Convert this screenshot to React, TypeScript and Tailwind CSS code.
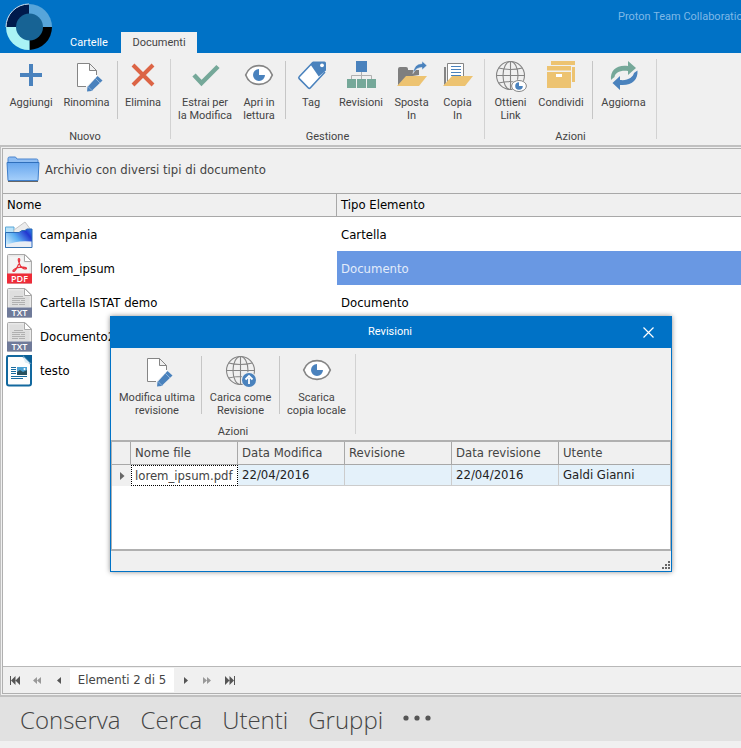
import type { ReactNode } from "react";

const BLUE = "#4a82bd";
const GREEN = "#75a899";
const GOLD = "#edc371";
const GREY = "#858585";

/* ---------- ribbon icons ---------- */

function Icon({ children }: { children: ReactNode }) {
  return (
    <svg width="32" height="32" viewBox="0 0 32 32" fill="none" aria-hidden="true">
      {children}
    </svg>
  );
}

const PlusIcon = () => (
  <Icon>
    <path d="M14 3h4v9h9v4h-9v9h-4v-9H5v-4h9z" fill={BLUE} />
  </Icon>
);

const EditPageIcon = () => (
  <Icon>
    <path d="M18 2v8h8v5L15 26H6V2h12z" fill="#fff" />
    <path d="M15 25.500H6.500V2.500H18.500L25.500 9.500V14M18.500 2.500V9.500H25.500" stroke={GREY} />
    <path d="M26.500 15L31.500 19.500L20.500 30L16 30.500L16.500 26Z" fill={BLUE} />
    <path d="M24 17l5 5M17 25.500l4.500 4.500" stroke="#8fb2d8" />
  </Icon>
);

const CrossIcon = () => (
  <Icon>
    <path d="M6 4l20 20M26 4L6 24" stroke="#dc6445" strokeWidth="4" />
  </Icon>
);

const CheckIcon = () => (
  <Icon>
    <path d="M5 14l7.500 8L29 5.500" stroke={GREEN} strokeWidth="4.500" />
  </Icon>
);

const EyeIcon = () => (
  <Icon>
    <path d="M2.700 14C7 1.500 25 1.500 29.300 14C25 26.500 7 26.500 2.700 14Z" fill="#fff" stroke={GREY} strokeWidth="1.700" />
    <path d="M16 14V8A6 6 0 1 0 22 14Z" fill={BLUE} />
  </Icon>
);

const TagIcon = () => (
  <Icon>
    <path d="M18 1L3.500 16.500L14.500 27.500L31 10V1Z" fill="#fff" />
    <path d="M15.500 3.500L18 0.500H29.500Q31 0.500 31 2V9.500L23.700 15.500Z" fill={BLUE} />
    <path d="M18 1.300L4.200 15.800Q3.300 16.700 4.200 17.600L13.400 27Q14.300 27.800 15.200 27L30 11" stroke={BLUE} strokeWidth="1.600" />
    <circle cx="27" cy="4.300" r="1.900" fill="#fff" />
  </Icon>
);

const HierarchyIcon = () => (
  <Icon>
    <path d="M16.500 11v9M6.500 19v-4.500h20V19" stroke="#b0b0b0" />
    <path d="M11 0h11v11H11z" fill={BLUE} />
    <path d="M2 18h9v9H2zM12 18h9v9h-9zM22 18h9v9h-9z" fill={GREEN} />
  </Icon>
);

const MoveFolderIcon = () => (
  <Icon>
    <path d="M2 24V8Q2 6 4 6H10Q12 6 12 8V9H23V14L10 16L3 25Z" fill="#7f7f7f" />
    <path d="M10 15H31L23 25H1Z" fill={GOLD} />
    <path d="M17 12.500Q18 2.500 26 2.500V0L31 4.500L26 9V6.500Q20 6.500 17 12.500Z" fill={BLUE} stroke="#f0f0f0" strokeWidth="0.600" />
  </Icon>
);

const CopyFolderIcon = () => (
  <Icon>
    <path d="M2 6h2v17l-2 1z" fill={GREY} />
    <path d="M5.500 2.500h16v13l-16 8z" fill="#fff" stroke={GREY} />
    <path d="M9 5.500h10M9 8.500h10M9 11.500h10M9 14.500h10" stroke={BLUE} />
    <path d="M10 15H31L23 25H1Z" fill={GOLD} />
  </Icon>
);

const globe = (
  <>
    <circle cx="15.500" cy="14.500" r="14" />
    <ellipse cx="15.500" cy="14.500" rx="7.500" ry="14" />
    <path d="M15.500 0.500v28M1.500 14.500h28M3.500 7Q15.500 10 27.500 7M3.500 22Q15.500 19 27.500 22" />
  </>
);

const GlobeEyeIcon = () => (
  <Icon>
    <g stroke={GREY} strokeWidth="1.100">{globe}</g>
    <ellipse cx="24" cy="25" rx="8" ry="6.500" fill="#f0f0f0" />
    <ellipse cx="24" cy="25" rx="7.400" ry="5.500" fill="#fff" stroke={GREY} />
    <path d="M24 25v-3.800a3.800 3.800 0 1 0 3.800 3.800z" fill={BLUE} />
  </Icon>
);

const GlobeUpIcon = () => (
  <Icon>
    <g stroke={GREY} strokeWidth="1.100">{globe}</g>
    <circle cx="24" cy="24" r="7.900" fill="#f0f0f0" />
    <circle cx="24" cy="24" r="7" fill={BLUE} />
    <path d="M24 28v-6M20.500 23.500l3.500-3.500l3.500 3.500" stroke="#fff" strokeWidth="1.800" />
  </Icon>
);

const BoxesIcon = () => (
  <Icon>
    <path d="M6 0h24v4H6zM27 6h3v15h-3zM2 5h24v4.500H2zM2 11h24v16H2z" fill={GOLD} />
    <path d="M11 13h6v3h-6z" fill="#fff" />
  </Icon>
);

const RefreshIcon = () => (
  <Icon>
    <path d="M3 19C2 9 9 3.500 20 5V0L28 7L20 14V10C12 9 7 12 6.500 16Q5 17 3 19Z" fill={GREEN} />
    <path d="M29.500 9.500C30 19 24 25 12 24V29L4.500 22L12 15V19C20 20 25 16 26 12Q27 11 29.500 9.500Z" fill={BLUE} />
  </Icon>
);

/* ---------- ribbon ---------- */

function RibbonButton({ width, icon, label }: { width: string; icon: ReactNode; label: ReactNode }) {
  return (
    <button type="button" className={`flex shrink-0 flex-col items-center pt-2 ${width}`}>
      {icon}
      <span className="mt-[3px] text-center whitespace-nowrap">{label}</span>
    </button>
  );
}

const Divider = () => <div className="mx-[2px] mt-2 h-[58px] w-px shrink-0 bg-[#c6c6c6]" />;

function RibbonGroup({ title, children }: { title: string; children: ReactNode }) {
  return (
    <section aria-label={title} className="flex shrink-0">
      <div className="flex flex-col px-1">
        <div className="flex h-[77px]">{children}</div>
        <div className="text-center">{title}</div>
      </div>
      <div className="mt-[6px] h-20 w-px bg-[#d2d2d2]" />
    </section>
  );
}

function Ribbon({ children }: { children: ReactNode }) {
  return (
    <div className="flex h-[92px] shrink-0 overflow-hidden bg-[#f0f0f0] font-[Roboto,sans-serif] text-[11px] leading-[13px] text-[#444]">
      {children}
    </div>
  );
}

/* ---------- file type icons ---------- */

const FolderLarge = () => (
  <svg width="34" height="28" viewBox="0 0 34 28" aria-hidden="true">
    <defs>
      <linearGradient id="fl" x1="0" y1="0" x2="0" y2="1">
        <stop offset="0" stopColor="#67a6ee" />
        <stop offset="1" stopColor="#a5cffa" />
      </linearGradient>
    </defs>
    <path d="M2 7V2.500Q2 1 3.500 1H9.500L11 3H30.500Q32 3 32 4.500V8Z" fill="#8fbdf2" stroke="#4c86cf" />
    <path d="M1 6.500H33L32 24.500H2Z" fill="url(#fl)" stroke="#3f7fcb" />
    <path d="M1.500 6.500h31" stroke="#2f6fbb" />
    <path d="M2 25.500h30" stroke="#666" />
  </svg>
);

const FolderSmall = () => (
  <svg width="28" height="28" viewBox="0 0 28 28" aria-hidden="true">
    <defs>
      <linearGradient id="fs" x1="0" y1="0.800" x2="1" y2="0.200">
        <stop offset="0" stopColor="#d6effc" />
        <stop offset="0.450" stopColor="#5aaef2" />
        <stop offset="0.850" stopColor="#2337cf" />
        <stop offset="1" stopColor="#2a6fe0" />
      </linearGradient>
    </defs>
    <path d="M0.500 6H9V12H0.500Z" fill="#b9e2f8" stroke="#5aa7d8" />
    <path d="M9 9L20 1L26 9L20 14H9Z" fill="#ececec" stroke="#c4c4c4" />
    <path d="M0.500 11.500H14L17 9.500H20L22 8H27V26.500H0.500Z" fill="url(#fs)" stroke="#2b6cb5" />
    <path d="M1 26V24Q12 19 26.500 20.500V26Z" fill="#e8edf4" />
    <path d="M0.500 26.500H27" stroke="#3876b4" />
  </svg>
);

function SheetIcon({ kind }: { kind: "PDF" | "TXT" }) {
  const pdf = kind === "PDF";
  return (
    <svg width="28" height="30" viewBox="0 0 28 30" aria-hidden="true">
      <path d="M3.500 0.500H20L26.500 7V29H2.500V1.500Q2.500 0.500 3.500 0.500Z" fill="#e9e9e9" stroke="#a9a9a9" />
      <path d="M4.500 2.500H18.500V8.500H24.500V19H4.500Z" fill={pdf ? "#f4f4f4" : "#dedede"} />
      <path d="M19.500 0.500V7.500H26.500Z" fill="#fff" stroke="#a9a9a9" />
      {pdf ? (
        <path
          d="M14 4.500C12.500 4.500 13.500 8.500 15.500 12C17 14.500 20.500 15.500 21.500 14.500C22 13 16 12.500 11.500 14C8 15.500 7 17.500 8.500 17.500C10.500 17.500 14.500 9.500 14.700 6.500Q14.800 4.500 14 4.500Z"
          fill="none"
          stroke="#e8353f"
          strokeWidth="1.200"
        />
      ) : (
        <path d="M9 8.500h9M7 10.500h13M7 12.500h8M16 12.500h4M7 14.500h13M7 16.500h6M14 16.500h6" stroke="#b0b0b0" />
      )}
      <path d="M2 19.500H27V29.500H2Z" fill={pdf ? "#ee2b38" : "#6f7a99"} />
      <text
        x="14.500"
        y="28"
        fontSize="9"
        fontWeight="600"
        textAnchor="middle"
        fill="#fff"
        fontFamily="Open Sans, sans-serif"
      >
        {kind}
      </text>
    </svg>
  );
}

const WriterIcon = () => (
  <svg width="28" height="32" viewBox="0 0 28 32" aria-hidden="true">
    <path d="M3 1H18L26 9V28.500Q26 30.500 24 30.500H4Q2 30.500 2 28.500V3Q2 1 3 1Z" fill="#fdfdfd" stroke="#12689e" strokeWidth="2" />
    <path d="M18 0H27V9Z" fill="#0a5f96" />
    <path d="M18 1L26 9L20 7.500Z" fill="#dcebf4" />
    <path d="M6 12.500h5M6 14.500h5M6 16.500h5M6 18.500h5M6 21.500h16M6 23.500h12" stroke="#176a9f" />
    <path d="M12 12h10v8H12z" fill="#4ba0d2" />
    <path d="M12 20v-3l3-2l3 2l4-2v5z" fill="#27505f" />
    <circle cx="19.500" cy="14" r="1" fill="#fff" />
  </svg>
);

const items = [
  { name: "campania", type: "Cartella", icon: <FolderSmall /> },
  { name: "lorem_ipsum", type: "Documento", icon: <SheetIcon kind="PDF" />, selected: true },
  { name: "Cartella ISTAT demo", type: "Documento", icon: <SheetIcon kind="TXT" /> },
  { name: "Documento2", type: "", icon: <SheetIcon kind="TXT" /> },
  { name: "testo", type: "", icon: <WriterIcon /> },
];

/* ---------- paging ---------- */

function PagerButton({ label, d, width = "w-[22px]", dim = false }: { label: string; d: string; width?: string; dim?: boolean }) {
  return (
    <button type="button" aria-label={label} className={`flex h-6 items-center justify-center ${width}`}>
      <svg width="11" height="9" viewBox="0 0 11 9" fill={dim ? "#999" : "#555"} aria-hidden="true">
        <path d={d} />
      </svg>
    </button>
  );
}

/* ---------- revisions dialog ---------- */

const revisionColumns = ["Nome file", "Data Modifica", "Revisione", "Data revisione", "Utente"];

function RevisionsDialog() {
  return (
    <div
      role="dialog"
      aria-label="Revisioni"
      className="absolute top-[316px] left-[110px] flex h-64 w-[562px] flex-col border border-[#0072c6] bg-[#f0f0f0] shadow-[0_0_5px_rgba(0,0,0,0.45)]"
    >
      <div className="flex h-[31px] shrink-0 items-center bg-[#0072c6] font-[Roboto,sans-serif] text-[11px] text-white">
        <div className="w-9" />
        <h2 className="flex-1 pl-2 text-center">Revisioni</h2>
        <button type="button" aria-label="Chiudi" className="flex h-full w-[46px] items-center justify-center">
          <svg width="11" height="11" viewBox="0 0 11 11" stroke="#fff" strokeWidth="1.200" aria-hidden="true">
            <path d="M0.500 0.500l10 10M10.500 0.500l-10 10" />
          </svg>
        </button>
      </div>
      <Ribbon>
        <RibbonGroup title="Azioni">
          <RibbonButton width="w-[84px]" icon={<EditPageIcon />} label={<>Modifica ultima<br />revisione</>} />
          <Divider />
          <RibbonButton width="w-[73px]" icon={<GlobeUpIcon />} label={<>Carica come<br />Revisione</>} />
          <Divider />
          <RibbonButton width="w-[69px]" icon={<EyeIcon />} label={<>Scarica<br />copia locale</>} />
        </RibbonGroup>
      </Ribbon>
      <div className="h-[111px] shrink-0 border-2 border-x border-[#b0b0b0] bg-white">
        <table className="w-full table-fixed border-separate border-spacing-0 text-[13px] leading-[18px] text-[#444]">
          <colgroup>
            <col className="w-[19px]" />
            <col className="w-[107px]" />
            <col className="w-[107px]" />
            <col className="w-[107px]" />
            <col className="w-[107px]" />
            <col />
          </colgroup>
          <thead className="bg-[#f0f0f0]">
            <tr className="h-[23px]">
              <th aria-label="Riga corrente" className="border-r border-b border-[#a8a8a8]" />
              {revisionColumns.map((c) => (
                <th key={c} className="border-r border-b border-[#a8a8a8] px-1 text-left font-normal last:border-r-0">
                  {c}
                </th>
              ))}
            </tr>
          </thead>
          <tbody className="text-[#222]">
            <tr className="h-[21px]">
              <td className="bg-[#f0f0f0]">
                <svg width="5" height="8" viewBox="0 0 5 8" fill="#666" className="ml-2" aria-hidden="true">
                  <path d="M0 0L4.500 4L0 8Z" />
                </svg>
              </td>
              <td className="border border-dotted border-black bg-white px-[3px] py-0 text-[#444]">lorem_ipsum.pdf</td>
              <td className="border-r border-b border-[#ccc] bg-[#e4f1fa] px-1 py-0">22/04/2016</td>
              <td className="border-r border-b border-[#ccc] bg-[#e4f1fa] px-1 py-0" />
              <td className="border-r border-b border-[#ccc] bg-[#e4f1fa] px-1 py-0">22/04/2016</td>
              <td className="border-b border-[#ccc] bg-[#e4f1fa] px-1 py-0">Galdi Gianni</td>
            </tr>
          </tbody>
        </table>
      </div>
      <div className="flex flex-1 items-end justify-end pr-px pb-[2px]">
        <svg width="8" height="8" viewBox="0 0 8 8" fill="#666" aria-hidden="true">
          <path d="M6 0h2v2H6zM3 3h2v2H3zM6 3h2v2H6zM0 6h2v2H0zM3 6h2v2H3zM6 6h2v2H6z" />
        </svg>
      </div>
    </div>
  );
}

/* ---------- page ---------- */

export default function App() {
  return (
    <div className="relative flex min-h-screen flex-col overflow-hidden bg-[#f0f0f0] pb-[7px] font-['DejaVu_Sans_Condensed','Noto_Sans',sans-serif] text-[#444]">
      <header className="flex h-[53px] shrink-0 items-end bg-[#0072c6] font-[Roboto,sans-serif] text-[11px] text-white">
        <svg width="48" height="48" viewBox="0 0 48 48" className="mb-[2px] ml-[5px] shrink-0" aria-hidden="true">
          <path d="M24 24V1A23 23 0 0 0 1 24Z" fill="#001a4c" />
          <path d="M24 24V1A23 23 0 0 1 47 24Z" fill="#57a5da" />
          <path d="M24 24H47A23 23 0 0 1 24.500 47Z" fill="#000" />
          <path d="M24.500 24H1A23 23 0 0 0 24.500 47Z" fill="#aaf3f5" />
          <path d="M1 24A23 23 0 0 1 24 1" fill="none" stroke="#cfe5f5" />
          <circle cx="24.500" cy="24" r="13.500" fill="#176394" />
        </svg>
        <nav className="ml-1 flex h-[21px]">
          <button type="button" className="w-16 pt-[2px]">Cartelle</button>
          <button type="button" className="w-[76px] bg-[#f0f0f0] pt-[2px] text-[#444]">Documenti</button>
        </nav>
        <div className="mb-[28px] ml-auto w-[123px] whitespace-nowrap text-[#7fb8e6]">
          Proton Team Collaboration
        </div>
      </header>

      <Ribbon>
        <RibbonGroup title="Nuovo">
          <RibbonButton width="w-[54px]" icon={<PlusIcon />} label="Aggiungi" />
          <RibbonButton width="w-[57px]" icon={<EditPageIcon />} label="Rinomina" />
          <Divider />
          <RibbonButton width="w-[46px]" icon={<CrossIcon />} label="Elimina" />
        </RibbonGroup>
        <RibbonGroup title="Gestione">
          <RibbonButton width="w-[60px]" icon={<CheckIcon />} label={<>Estrai per<br />la Modifica</>} />
          <RibbonButton width="w-[48px]" icon={<EyeIcon />} label={<>Apri in<br />lettura</>} />
          <Divider />
          <RibbonButton width="w-[46px]" icon={<TagIcon />} label="Tag" />
          <RibbonButton width="w-[54px]" icon={<HierarchyIcon />} label="Revisioni" />
          <RibbonButton width="w-[47px]" icon={<MoveFolderIcon />} label={<>Sposta<br />In</>} />
          <RibbonButton width="w-[45px]" icon={<CopyFolderIcon />} label={<>Copia<br />In</>} />
        </RibbonGroup>
        <RibbonGroup title="Azioni">
          <RibbonButton width="w-[43px]" icon={<GlobeEyeIcon />} label={<>Ottieni<br />Link</>} />
          <RibbonButton width="w-[58px]" icon={<BoxesIcon />} label="Condividi" />
          <Divider />
          <RibbonButton width="w-[57px]" icon={<RefreshIcon />} label="Aggiorna" />
        </RibbonGroup>
      </Ribbon>

      <main className="flex flex-1 flex-col border-t-2 border-b-2 border-l border-[#c0c0c0] py-px pl-px text-[13px]">
        <div className="flex flex-1 flex-col border-y border-l border-[#b0b0b0]">
          <div className="flex h-[45px] shrink-0 items-center border-b border-[#a8a8a8] pb-[3px] pl-[3px]">
            <FolderLarge />
            <h1 className="ml-[5px]">Archivio con diversi tipi di documento</h1>
          </div>
          <div className="flex-1 bg-white">
            <table className="w-full table-fixed border-separate border-spacing-0 leading-4 text-black">
              <colgroup>
                <col className="w-[334px]" />
                <col />
              </colgroup>
              <thead className="bg-[#f0f0f0]">
                <tr className="h-[23px]">
                  <th className="border-r border-b border-[#a8a8a8] px-1 py-0 text-left font-normal">Nome</th>
                  <th className="border-b border-[#a8a8a8] px-1 py-0 text-left font-normal">Tipo Elemento</th>
                </tr>
              </thead>
              <tbody>
                {items.map((it) => (
                  <tr key={it.name} className="h-[34px]">
                    <td className="pt-px pb-0 pl-[2px]">
                      <div className="flex items-center gap-[7px]">
                        {it.icon}
                        {it.name}
                      </div>
                    </td>
                    <td className={it.selected ? "bg-[#6998e3] px-1 pt-[2px] pb-0 text-[#e3ecfa]" : "px-1 pt-[2px] pb-0"}>{it.type}</td>
                  </tr>
                ))}
              </tbody>
            </table>
          </div>
          <div className="flex h-[27px] shrink-0 items-center border-t border-[#b8b8b8] pl-px">
            <PagerButton label="Primo" d="M0 0h1v9H0zM1 4.500L5.500 0v9zM5.500 4.500L10 0v9z" />
            <PagerButton label="Pagina precedente" dim d="M1 4.500L5 1v7zM5 4.500L9 1v7z" />
            <PagerButton label="Precedente" d="M3 4.500L7 1v7z" />
            <span className="flex h-6 w-[104px] items-center justify-center bg-white whitespace-nowrap">Elementi 2 di 5</span>
            <PagerButton label="Successivo" d="M4 1v7L8 4.500z" />
            <PagerButton label="Pagina successiva" dim d="M1 1v7L5 4.500zM5 1v7L9 4.500z" />
            <PagerButton label="Ultimo" width="w-6" d="M0 0v9L4.500 4.500zM4.500 0v9L9 4.500zM9 0h1v9H9z" />
          </div>
        </div>
      </main>

      <footer className="flex h-11 shrink-0 items-center gap-5 bg-[#e1e1e1] pt-[2px] pl-5 font-['Open_Sans',sans-serif] text-2xl font-light">
        <button type="button">Conserva</button>
        <button type="button">Cerca</button>
        <button type="button">Utenti</button>
        <button type="button">Gruppi</button>
        <button type="button" aria-label="Altro" className="pb-1">
          <svg width="28" height="6" viewBox="0 0 28 6" fill="#555" aria-hidden="true">
            <circle cx="3" cy="3" r="2.600" />
            <circle cx="14" cy="3" r="2.600" />
            <circle cx="25" cy="3" r="2.600" />
          </svg>
        </button>
      </footer>

      <RevisionsDialog />
    </div>
  );
}
